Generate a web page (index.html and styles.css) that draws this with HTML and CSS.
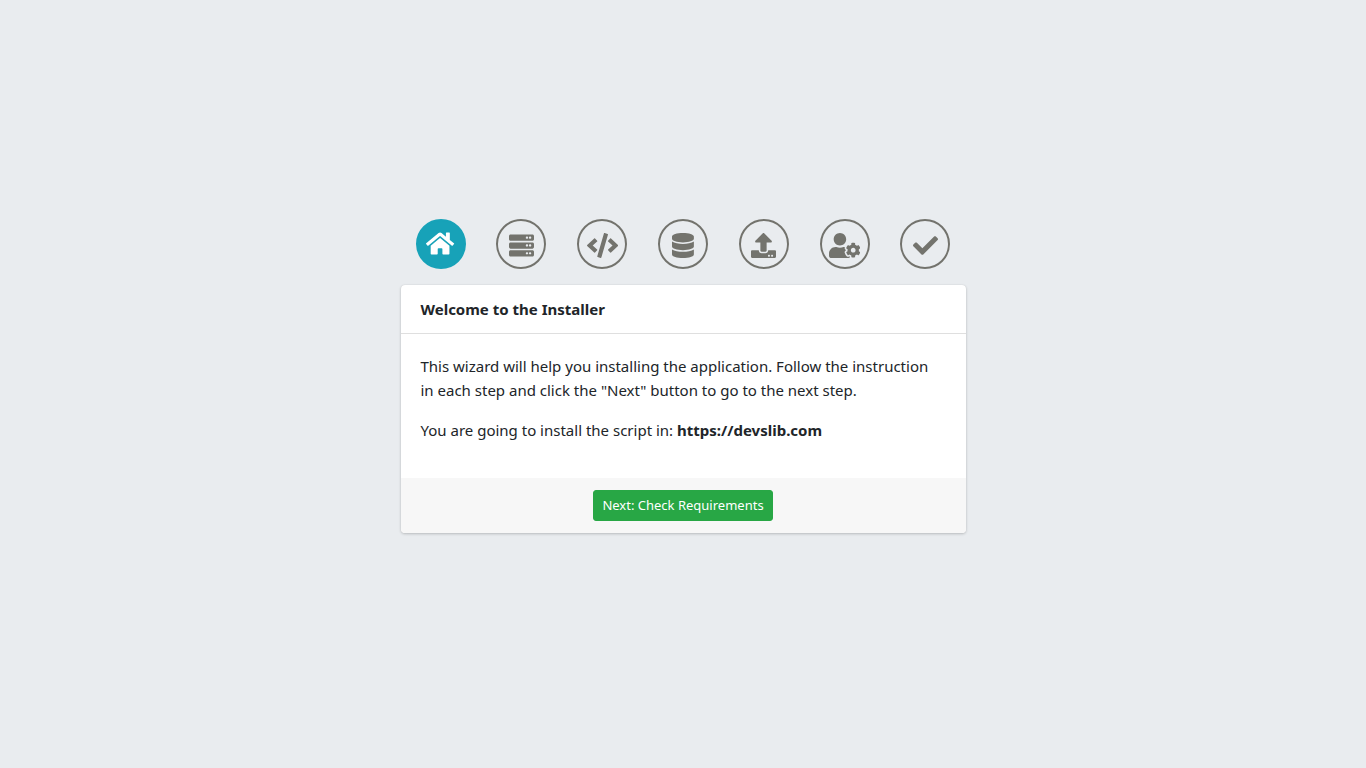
FILE: index.html
```html
<!DOCTYPE html>
<html lang="en">
<head>
    <meta charset="UTF-8">
    <meta name="viewport" content="width=device-width, initial-scale=1">
    <title>Installer</title>
    <link rel="stylesheet" href="styles.css">
</head>
<body>
    <main class="installer">
        <ol class="steps">
            <li class="step active">
                <svg class="icon" viewBox="0 0 576 512"><path d="M280.37 148.26L96 300.11V464a16 16 0 0 0 16 16l112.06-.29a16 16 0 0 0 15.92-16V368a16 16 0 0 1 16-16h64a16 16 0 0 1 16 16v95.64a16 16 0 0 0 16 16.05L464 480a16 16 0 0 0 16-16V300L295.67 148.26a12.19 12.19 0 0 0-15.3 0zM571.6 251.47L488 182.56V44.05a12 12 0 0 0-12-12h-56a12 12 0 0 0-12 12v72.61L318.47 43a48 48 0 0 0-61 0L4.34 251.47a12 12 0 0 0-1.6 16.9l25.5 31A12 12 0 0 0 45.15 301l235.22-193.74a12.19 12.19 0 0 1 15.3 0L530.9 301a12 12 0 0 0 16.9-1.6l25.5-31a12 12 0 0 0-1.7-16.93z"/></svg>
            </li>
            <li class="step">
                <svg class="icon" viewBox="0 0 512 512"><path d="M480 160H32c-17.673 0-32-14.327-32-32V64c0-17.673 14.327-32 32-32h448c17.673 0 32 14.327 32 32v64c0 17.673-14.327 32-32 32zm-48-88c-13.255 0-24 10.745-24 24s10.745 24 24 24 24-10.745 24-24-10.745-24-24-24zm-64 0c-13.255 0-24 10.745-24 24s10.745 24 24 24 24-10.745 24-24-10.745-24-24-24zm112 248H32c-17.673 0-32-14.327-32-32v-64c0-17.673 14.327-32 32-32h448c17.673 0 32 14.327 32 32v64c0 17.673-14.327 32-32 32zm-48-88c-13.255 0-24 10.745-24 24s10.745 24 24 24 24-10.745 24-24-10.745-24-24-24zm-64 0c-13.255 0-24 10.745-24 24s10.745 24 24 24 24-10.745 24-24-10.745-24-24-24zm112 248H32c-17.673 0-32-14.327-32-32v-64c0-17.673 14.327-32 32-32h448c17.673 0 32 14.327 32 32v64c0 17.673-14.327 32-32 32zm-48-88c-13.255 0-24 10.745-24 24s10.745 24 24 24 24-10.745 24-24-10.745-24-24-24zm-64 0c-13.255 0-24 10.745-24 24s10.745 24 24 24 24-10.745 24-24-10.745-24-24-24z"/></svg>
            </li>
            <li class="step">
                <svg class="icon" viewBox="0 0 640 512"><path d="M278.9 511.5l-61-17.7c-6.4-1.8-10-8.5-8.2-14.9L346.2 8.7c1.8-6.4 8.5-10 14.9-8.2l61 17.7c6.4 1.8 10 8.5 8.2 14.9L293.8 503.3c-1.9 6.4-8.5 10.1-14.9 8.2zm-114-112.2l43.5-46.4c4.6-4.9 4.3-12.7-.8-17.2L117 256l90.6-79.7c5.1-4.5 5.5-12.3.8-17.2l-43.5-46.4c-4.5-4.8-12.1-5.1-17-.5L3.8 247.2c-5.1 4.7-5.1 12.8 0 17.5l144.1 135.1c4.9 4.6 12.5 4.4 17-.5zm327.2.6l144.1-135.1c5.1-4.7 5.1-12.8 0-17.5L492.1 112.1c-4.8-4.5-12.4-4.3-17 .5L431.6 159c-4.6 4.9-4.3 12.7.8 17.2L523 256l-90.6 79.7c-5.1 4.5-5.5 12.3-.8 17.2l43.5 46.4c4.5 4.9 12.1 5.1 17 .6z"/></svg>
            </li>
            <li class="step">
                <svg class="icon" viewBox="0 0 448 512"><path d="M448 73.143v45.714C448 159.143 347.667 192 224 192S0 159.143 0 118.857V73.143C0 32.857 100.333 0 224 0s224 32.857 224 73.143zM448 176v102.857C448 319.143 347.667 352 224 352S0 319.143 0 278.857V176c48.125 33.143 136.208 48.572 224 48.572S399.874 209.143 448 176zm0 160v102.857C448 479.143 347.667 512 224 512S0 479.143 0 438.857V336c48.125 33.143 136.208 48.572 224 48.572S399.874 369.143 448 336z"/></svg>
            </li>
            <li class="step">
                <svg class="icon" viewBox="0 0 512 512"><path d="M296 384h-80c-13.3 0-24-10.7-24-24V192h-87.7c-17.8 0-26.7-21.5-14.1-34.1L242.3 5.7c7.5-7.5 19.8-7.5 27.3 0l152.2 152.2c12.6 12.6 3.7 34.1-14.1 34.1H320v168c0 13.3-10.7 24-24 24zm216-8v112c0 13.3-10.7 24-24 24H24c-13.3 0-24-10.7-24-24V376c0-13.3 10.7-24 24-24h136v8c0 30.9 25.1 56 56 56h80c30.9 0 56-25.1 56-56v-8h136c13.3 0 24 10.7 24 24zm-124 88c0-11-9-20-20-20s-20 9-20 20 9 20 20 20 20-9 20-20zm64 0c0-11-9-20-20-20s-20 9-20 20 9 20 20 20 20-9 20-20z"/></svg>
            </li>
            <li class="step">
                <svg class="icon" viewBox="0 0 640 512"><path d="M610.5 373.3c2.6-14.1 2.6-28.5 0-42.6l25.8-14.9c3-1.7 4.3-5.2 3.3-8.5-6.7-21.6-18.2-41.2-33.2-57.4-2.3-2.5-6-3.1-9-1.4l-25.8 14.9c-10.9-9.3-23.4-16.5-36.9-21.3v-29.8c0-3.4-2.4-6.4-5.7-7.1-22.3-5-45-4.8-66.2 0-3.3.7-5.7 3.7-5.7 7.1v29.8c-13.5 4.8-26 12-36.9 21.3l-25.8-14.9c-2.9-1.7-6.7-1.1-9 1.4-15 16.2-26.5 35.8-33.2 57.4-1 3.3.4 6.8 3.3 8.5l25.8 14.9c-2.6 14.1-2.6 28.5 0 42.6l-25.8 14.9c-3 1.7-4.3 5.2-3.3 8.5 6.7 21.6 18.2 41.1 33.2 57.4 2.3 2.5 6 3.1 9 1.4l25.8-14.9c10.9 9.3 23.4 16.5 36.9 21.3v29.8c0 3.4 2.4 6.4 5.7 7.1 22.3 5 45 4.8 66.2 0 3.3-.7 5.7-3.7 5.7-7.1v-29.8c13.5-4.8 26-12 36.9-21.3l25.8 14.9c2.9 1.7 6.7 1.1 9-1.4 15-16.2 26.5-35.8 33.2-57.4 1-3.3-.4-6.8-3.3-8.5l-25.8-14.9zM496 400.5c-26.8 0-48.5-21.8-48.5-48.5s21.8-48.5 48.5-48.5 48.5 21.8 48.5 48.5-21.7 48.5-48.5 48.5zM224 256c70.7 0 128-57.3 128-128S294.7 0 224 0 96 57.3 96 128s57.3 128 128 128zm201.2 226.5c-2.3-1.2-4.6-2.6-6.8-3.9l-7.9 4.6c-6 3.4-12.8 5.3-19.6 5.3-10.9 0-21.4-4.6-28.9-12.6-18.3-19.8-32.3-43.9-40.2-69.6-5.5-17.7 1.9-36.4 17.9-45.7l7.9-4.6c-.1-2.6-.1-5.2 0-7.8l-7.9-4.6c-16-9.2-23.4-28-17.9-45.7.9-2.9 2.2-5.8 3.2-8.7-3.8-.3-7.5-1.2-11.4-1.2h-16.7c-22.2 10.2-46.9 16-72.9 16s-50.6-5.8-72.9-16h-16.7C60.2 288 0 348.2 0 422.4V464c0 26.5 21.5 48 48 48h352c10.1 0 19.5-3.2 27.2-8.5-1.2-3.8-2-7.7-2-11.8v-9.2z"/></svg>
            </li>
            <li class="step">
                <svg class="icon" viewBox="0 0 512 512"><path d="M173.898 439.404l-166.4-166.4c-9.997-9.997-9.997-26.206 0-36.204l36.203-36.204c9.997-9.998 26.207-9.998 36.204 0L192 312.69 432.095 72.596c9.997-9.997 26.207-9.997 36.204 0l36.203 36.204c9.997 9.997 9.997 26.206 0 36.204l-294.4 294.401c-9.998 9.997-26.207 9.997-36.204-.001z"/></svg>
            </li>
        </ol>

        <div class="card">
            <h1 class="card-header">Welcome to the Installer</h1>
            <div class="card-body">
                <p>This wizard will help you installing the application. Follow the instruction<br>in each step and click the "Next" button to go to the next step.</p>
                <p>You are going to install the script in: <strong>https://devslib.com</strong></p>
            </div>
            <div class="card-footer">
                <button type="button" class="btn">Next: Check Requirements</button>
            </div>
        </div>
    </main>
</body>
</html>
```
FILE: styles.css
```css
* {
    box-sizing: border-box;
}

body {
    display: flex;
    align-items: center;
    justify-content: center;
    min-height: 100vh;
    margin: 0;
    background-color: #e9ecef;
    color: #212529;
    font-family: "Segoe UI", "Noto Sans", "Open Sans", sans-serif;
    font-size: 15px;
    line-height: 24px;
}

.installer {
    width: 100%;
    max-width: 565px;
}

/* Wizard steps */
.steps {
    display: flex;
    justify-content: space-between;
    list-style: none;
    margin: 0 0 16px;
    padding: 0 15px;
}

.step {
    display: flex;
    align-items: center;
    justify-content: center;
    width: 50px;
    height: 50px;
    padding-top: 3px;
    border: 2px solid #73736d;
    border-radius: 50%;
    color: #73736d;
}

.step.active {
    padding-top: 0;
    padding-bottom: 1px;
    border-color: #17a2b8;
    background-color: #17a2b8;
    color: #fff;
}

.icon {
    flex: none;
    height: 25px;
    fill: currentColor;
}

/* Card */
.card {
    margin-bottom: 16px;
    background-color: #fff;
    border-radius: 4px;
    box-shadow: 0 0 1px rgba(0, 0, 0, 0.125), 0 1px 3px rgba(0, 0, 0, 0.2);
    overflow: hidden;
}

.card-header {
    margin: 0;
    padding: 12px 20px;
    border-bottom: 1px solid rgba(0, 0, 0, 0.125);
    font-size: 15px;
    font-weight: 700;
}

.card-body {
    padding: 20px;
}

.card-body p {
    margin: 0 0 16px;
}

.card-footer {
    display: flex;
    justify-content: center;
    padding: 12px 20px;
    background-color: #f7f7f7;
}

.btn {
    padding: 4px 8px;
    border: 1px solid #28a745;
    border-radius: 3px;
    background-color: #28a745;
    color: #fff;
    font-family: inherit;
    font-size: 13px;
    line-height: 21px;
    cursor: pointer;
}

.btn:hover {
    background-color: #218838;
}
```
